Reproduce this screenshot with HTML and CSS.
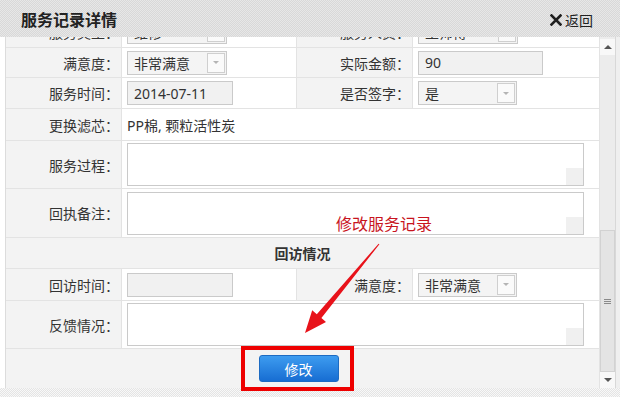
FILE: index.html
```html
<!DOCTYPE html>
<html lang="zh-CN">

<head>
    <meta charset="UTF-8">
    <meta name="viewport" content="width=device-width, initial-scale=1.0">
    <title>服务记录详情</title>
    <link rel="stylesheet" href="styles.css">
</head>

<body>
    <div class="dialog">
        <header class="dlg-head">
            <h1 class="dlg-title">服务记录详情</h1>
            <a class="dlg-close">
                <svg width="12" height="12" viewBox="0 0 12 12">
                    <path d="M1.5 1.5 L10.5 10.5 M10.5 1.5 L1.5 10.5" stroke="#1f1f1f" stroke-width="2.6" stroke-linecap="square" />
                </svg>返回
            </a>
        </header>

        <div class="dlg-body">
            <div class="page-edge"></div>

            <div class="viewport">
                <div class="sheet">
                    <!-- 被标题栏挡住一半的第一行 -->
                    <div class="row h31">
                        <div class="lbl">服务类型：</div>
                        <div class="val"><div class="select w100">维修<span class="drop"></span></div></div>
                        <div class="lbl">服务人员：</div>
                        <div class="val"><div class="select w100">王师傅<span class="drop"></span></div></div>
                    </div>
                    <div class="row h30">
                        <div class="lbl">满意度：</div>
                        <div class="val"><div class="select w100">非常满意<span class="drop"></span></div></div>
                        <div class="lbl">实际金额：</div>
                        <div class="val"><div class="input w125">90</div></div>
                    </div>
                    <div class="row h31">
                        <div class="lbl">服务时间：</div>
                        <div class="val"><div class="input w106">2014-07-11</div></div>
                        <div class="lbl">是否签字：</div>
                        <div class="val"><div class="select w99">是<span class="drop"></span></div></div>
                    </div>
                    <div class="row wide h32">
                        <div class="lbl">更换滤芯：</div>
                        <div class="val">PP棉, 颗粒活性炭</div>
                    </div>
                    <div class="row wide h48">
                        <div class="lbl">服务过程：</div>
                        <div class="val"><div class="textbox"><span class="corner"></span></div></div>
                    </div>
                    <div class="row wide h49">
                        <div class="lbl">回执备注：</div>
                        <div class="val"><div class="textbox"><span class="corner"></span></div></div>
                    </div>
                    <div class="row h31">
                        <div class="section">回访情况</div>
                    </div>
                    <div class="row h32">
                        <div class="lbl">回访时间：</div>
                        <div class="val"><div class="input w106"></div></div>
                        <div class="lbl">满意度：</div>
                        <div class="val"><div class="select w99">非常满意<span class="drop"></span></div></div>
                    </div>
                    <div class="row wide h48">
                        <div class="lbl">反馈情况：</div>
                        <div class="val"><div class="textbox"><span class="corner"></span></div></div>
                    </div>
                    <div class="row last h39">
                        <div class="actions"><button class="btn-blue">修改</button></div>
                    </div>
                </div>
            </div>

            <div class="vscroll">
                <div class="sb-btn"><i class="tri-up"></i></div>
                <div class="sb-track">
                    <div class="sb-thumb">
                        <svg width="7" height="7" viewBox="0 0 7 7">
                            <path d="M0 1.5 H7 M0 3.5 H7 M0 5.5 H7" stroke="#8a8a8a" stroke-width="1" />
                        </svg>
                    </div>
                </div>
                <div class="sb-btn"><i class="tri-down"></i></div>
            </div>

            <div class="frame-edge"></div>
        </div>

        <div class="dlg-foot"></div>
    </div>

    <!-- 截图上的红色标注 -->
    <svg class="note-arrow" width="620" height="397" viewBox="0 0 620 397">
        <polygon points="378.6,243.7 379.4,244.3 321.4,318 326,321.9 305,333 312.2,310.3 316.8,314.2" fill="#e8121a" />
    </svg>
    <div class="note-text">修改服务记录</div>
    <div class="note-box"></div>
</body>

</html>
```

FILE: styles.css
```css
* {
    margin: 0;
    padding: 0;
    box-sizing: border-box;
}

body {
    width: 620px;
    height: 397px;
    overflow: hidden;
    position: relative;
    font-family: "Noto Sans", "Noto Sans CJK SC", sans-serif;
    font-size: 14px;
    color: #333;
    background: #fff;
}

.dialog {
    height: 397px;
    display: flex;
    flex-direction: column;
}

/* 标题栏 网点底纹 */
.dlg-head {
    height: 37px;
    flex: none;
    display: flex;
    align-items: center;
    justify-content: space-between;
    padding: 0 27px 0 21px;
    background: repeating-conic-gradient(#d8d8d8 0 25%, #e7e7e7 0 50%) 0 0 / 2px 2px;
    position: relative;
    z-index: 2;
}

.dlg-title {
    font-family: "Noto Sans CJK SC", sans-serif;
    font-size: 16px;
    font-weight: bold;
    color: #222;
    line-height: 1;
}

.dlg-close {
    display: flex;
    align-items: center;
    gap: 3px;
    margin-top: 3px;
    font-size: 14px;
    color: #222;
    cursor: pointer;
}

.dlg-body {
    height: 351px;
    flex: none;
    display: flex;
}

.page-edge {
    width: 5px;
    background: #fff;
}

.viewport {
    width: 595px;
    overflow: hidden;
    background: #fff;
}

.sheet {
    margin-top: -20px;
    border-left: 1px solid #dcdcdc;
}

.row {
    display: grid;
    grid-template-columns: 116px 175px 116px 187px;
    border-bottom: 1px solid #e3e3e3;
}

.row > div {
    display: flex;
    align-items: center;
    border-right: 1px solid #e3e3e3;
}

.row.last {
    border-bottom: none;
}

.h30 { height: 30px; }
.h31 { height: 31px; }
.h32 { height: 32px; }
.h39 { height: 39px; }
.h48 { height: 48px; }
.h49 { height: 49px; }

.lbl {
    justify-content: flex-end;
    padding-right: 2px;
    background: #f3f3f3;
    white-space: nowrap;
}

.val {
    padding-left: 5px;
    background: #fff;
}

.wide .val {
    grid-column: span 3;
}

.section {
    grid-column: 1 / -1;
    justify-content: center;
    font-weight: bold;
    background: #f3f3f3;
}

.actions {
    grid-column: 1 / -1;
    justify-content: center;
    background: #f3f3f3;
    padding-right: 8px;
}

/* 表单控件 */
.input,
.select {
    height: 24px;
    display: flex;
    align-items: center;
    padding-left: 6px;
    border: 1px solid #cacaca;
    background: #f1f1f1;
}

.select {
    justify-content: space-between;
    padding-right: 1px;
    background: #f4f4f4;
}

.w99 { width: 99px; }
.w100 { width: 100px; }
.w106 { width: 106px; }
.w125 { width: 125px; }

.drop {
    width: 18px;
    height: 20px;
    border: 1px solid #cfcfcf;
    background: #fafafa;
    display: flex;
    align-items: center;
    justify-content: center;
}

.drop::after {
    content: "";
    border-left: 3px solid transparent;
    border-right: 3px solid transparent;
    border-top: 3px solid #b4b4b4;
}

.textbox {
    width: 457px;
    height: 43px;
    border: 1px solid #cacaca;
    background: #fff;
    display: flex;
    justify-content: flex-end;
    align-items: flex-end;
}

.corner {
    width: 17px;
    height: 17px;
    background: #f0f0f0;
}

.btn-blue {
    width: 80px;
    height: 27px;
    border: 1px solid #1d6bc2;
    border-radius: 3px;
    background: linear-gradient(#3d9cf0, #176dd2);
    color: #fff;
    font-family: "Noto Sans CJK SC", sans-serif;
    font-size: 14px;
}

/* 滚动条 */
.vscroll {
    width: 15px;
    display: flex;
    flex-direction: column;
    background: #ececec;
    padding-top: 2px;
}

.sb-btn {
    height: 16px;
    background: #f8f8f8;
    display: flex;
    align-items: center;
    justify-content: center;
}

.tri-up {
    border-left: 4px solid transparent;
    border-right: 4px solid transparent;
    border-bottom: 4px solid #555;
}

.tri-down {
    border-left: 4px solid transparent;
    border-right: 4px solid transparent;
    border-top: 4px solid #555;
}

.sb-track {
    flex: 1;
    display: flex;
    flex-direction: column;
    justify-content: flex-end;
}

.sb-thumb {
    height: 142px;
    background: #e4e4e4;
    border: 1px solid #d2d2d2;
    display: flex;
    align-items: center;
    justify-content: center;
}

.frame-edge {
    width: 5px;
    background: #efefef;
    border-left: 1px solid #d8d8d8;
}

.dlg-foot {
    flex: 1;
    background: repeating-conic-gradient(#e4e4e4 0 25%, #f8f8f8 0 50%) 0 0 / 2px 2px;
}

/* 红色标注 */
.note-arrow {
    position: absolute;
    left: 0;
    top: 0;
    pointer-events: none;
}

.note-text {
    position: absolute;
    left: 336px;
    top: 213px;
    font-family: "Noto Sans CJK SC", sans-serif;
    font-size: 16px;
    line-height: 20px;
    color: #c8141e;
}

.note-box {
    position: absolute;
    left: 241px;
    top: 346px;
    width: 113px;
    height: 45px;
    border: 4px solid #ee0000;
}
```
